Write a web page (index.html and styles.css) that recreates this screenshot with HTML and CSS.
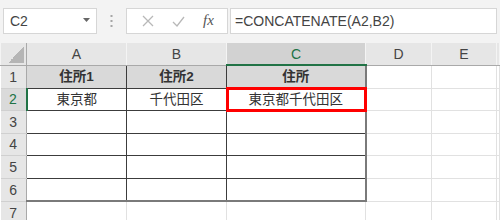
FILE: index.html
```html
<!DOCTYPE html>
<html lang="ja">
<head>
    <meta charset="UTF-8">
    <title>CONCATENATE</title>
    <link rel="stylesheet" href="styles.css">
</head>
<body>

<div class="toolbar">
    <div class="namebox">
        <span>C2</span>
        <svg class="drop" width="7" height="4" viewBox="0 0 7 4"><path d="M0 0h7L3.5 4z" fill="#666"/></svg>
    </div>
    <div class="grip">
        <svg width="3" height="13" viewBox="0 0 3 13"><g fill="#a6a6a6"><rect x="0.5" y="0" width="2" height="2"/><rect x="0.5" y="5" width="2" height="2"/><rect x="0.5" y="10" width="2" height="2"/></g></svg>
    </div>
    <div class="fbuttons">
        <svg width="12" height="12" viewBox="0 0 12 12"><path d="M1 1l10 10M11 1L1 11" stroke="#b8b8b8" stroke-width="1.3" fill="none"/></svg>
        <svg width="13" height="11" viewBox="0 0 13 11"><path d="M1 6l4 4L12 1" stroke="#b8b8b8" stroke-width="1.3" fill="none"/></svg>
        <span class="fx">fx</span>
    </div>
    <div class="formula">=CONCATENATE(A2,B2)</div>
</div>

<table class="sheet">
    <colgroup>
        <col style="width:26px"><col style="width:100px"><col style="width:100px"><col style="width:139px"><col style="width:66px"><col style="width:65px"><col>
    </colgroup>
    <tr class="colhead">
        <th class="corner"></th>
        <th>A</th>
        <th>B</th>
        <th class="active">C</th>
        <th>D</th>
        <th>E</th>
        <th></th>
    </tr>
    <tr>
        <td class="rh">1</td>
        <td class="t hd">住所1</td>
        <td class="t hd">住所2</td>
        <td class="t hd last">住所</td>
        <td></td><td></td><td></td>
    </tr>
    <tr>
        <td class="rh active">2</td>
        <td class="t">東京都</td>
        <td class="t">千代田区</td>
        <td class="t last sel">東京都千代田区</td>
        <td></td><td></td><td></td>
    </tr>
    <tr>
        <td class="rh">3</td>
        <td class="t"></td><td class="t"></td><td class="t last"></td>
        <td></td><td></td><td></td>
    </tr>
    <tr>
        <td class="rh">4</td>
        <td class="t"></td><td class="t"></td><td class="t last"></td>
        <td></td><td></td><td></td>
    </tr>
    <tr>
        <td class="rh">5</td>
        <td class="t"></td><td class="t"></td><td class="t last"></td>
        <td></td><td></td><td></td>
    </tr>
    <tr>
        <td class="rh">6</td>
        <td class="t bottom"></td><td class="t bottom"></td><td class="t last bottom"></td>
        <td></td><td></td><td></td>
    </tr>
    <tr>
        <td class="rh">7</td>
        <td></td><td></td><td></td><td></td><td></td><td></td>
    </tr>
</table>

</body>
</html>
```

FILE: styles.css
```css
body {
    margin: 0;
    width: 500px;
    height: 220px;
    overflow: hidden;
    background: #fff;
    font-family: "Liberation Sans", "Noto Sans CJK JP", sans-serif;
    color: #333;
}

.toolbar {
    display: flex;
    align-items: flex-start;
    height: 43px;
    box-sizing: border-box;
    padding: 8px 3px 0;
    background: #f3f3f3;
}

.namebox {
    display: flex;
    align-items: center;
    justify-content: space-between;
    width: 94px;
    height: 26px;
    box-sizing: border-box;
    padding: 0 6px 0 6px;
    background: #fff;
    border: 1px solid #d6d6d6;
    font-size: 14px;
    color: #444;
}

.namebox .drop {
    margin-top: -2px;
}

.grip {
    display: flex;
    justify-content: center;
    width: 29px;
    padding-top: 7px;
}

.fbuttons {
    display: flex;
    align-items: center;
    justify-content: space-around;
    width: 102px;
    height: 26px;
    box-sizing: border-box;
    padding: 0 4px 0 6px;
    background: #fff;
    border: 1px solid #d6d6d6;
}

.fx {
    font-family: "Liberation Serif", serif;
    font-style: italic;
    font-size: 15px;
    color: #555;
    margin-top: -2px;
}

.formula {
    flex: 1;
    margin-left: 2px;
    height: 26px;
    box-sizing: border-box;
    padding: 0 4px;
    line-height: 24px;
    background: #fff;
    border: 1px solid #d6d6d6;
    font-size: 14px;
    color: #444;
}

.sheet {
    border-collapse: collapse;
    table-layout: fixed;
    width: 500px;
}

.sheet th,
.sheet td {
    height: 21.5px;
    padding: 0;
    text-align: center;
    line-height: 1;
    border: 1px solid #e1e1e1;
    font-size: 13.5px;
    color: #333;
}

.colhead th {
    height: 21px;
    background: #e6e6e6;
    border-top: none;
    border-left: 1px solid #f4f4f4;
    border-right: 1px solid #f4f4f4;
    border-bottom: 1px solid #a9a9a9;
    font-weight: normal;
    font-size: 14px;
    color: #444;
}

.colhead th.corner {
    background: linear-gradient(to bottom right, transparent 50%, #b5b5b5 50%) no-repeat right 2px bottom 2px / 16px 16px, #e6e6e6;
    border-right: 1px solid #a9a9a9;
}

.colhead th.active {
    background: #d2d2d2;
    color: #217346;
    border-bottom: 2px solid #217346;
}

.sheet td.rh {
    background: #e6e6e6;
    border-left: none;
    border-right: 1px solid #a9a9a9;
    border-bottom: 1px solid #d0d0d0;
    font-family: "Liberation Sans", sans-serif;
    font-size: 14px;
    color: #444;
}

.sheet td.rh.active {
    background: #dadada;
    color: #217346;
    border-right: 2px solid #217346;
}

.sheet td.t {
    border: 1px solid #3c3c3c;
}

.sheet td.hd {
    background: #d9d9d9;
    font-weight: bold;
}

.sheet td.last {
    border-right: 2px solid #7a7a7a;
}

.sheet td.bottom {
    border-bottom: 2px solid #7a7a7a;
}

.sheet td.sel {
    outline: 3px solid #ff0000;
    outline-offset: -2px;
}
```
